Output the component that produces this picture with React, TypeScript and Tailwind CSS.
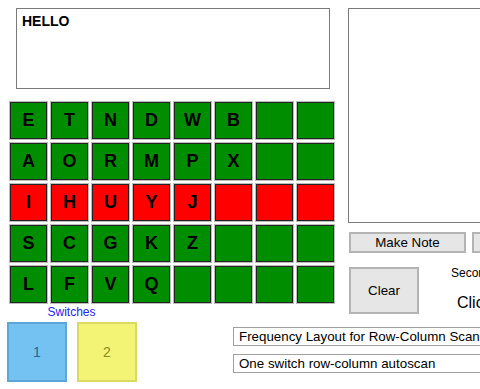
import React from 'react';

const rows: { letters: string[]; color: 'green' | 'red' }[] = [
    { letters: ['E', 'T', 'N', 'D', 'W', 'B', '', ''], color: 'green' },
    { letters: ['A', 'O', 'R', 'M', 'P', 'X', '', ''], color: 'green' },
    { letters: ['I', 'H', 'U', 'Y', 'J', '', '', ''], color: 'red' },
    { letters: ['S', 'C', 'G', 'K', 'Z', '', '', ''], color: 'green' },
    { letters: ['L', 'F', 'V', 'Q', '', '', '', ''], color: 'green' },
];

function Cell({ letter, color }: { letter: string; color: 'green' | 'red' }) {
    return (
        <div
            className={`w-[37px] h-[37px] border border-[#222] shadow-[0_0_0_1px_#bdbdbd] flex items-center justify-center text-[18px] font-bold text-black ${color === 'red' ? 'bg-[#ff0000]' : 'bg-[#008e00]'}`}
        >
            {letter}
        </div>
    );
}

export default function App() {
    return (
        <div className="w-[480px] h-[389px] overflow-hidden bg-white text-black font-['Liberation_Sans',Arial,sans-serif]">
            <div className="flex h-[304px]">
                {/* left column: message + letter grid */}
                <div className="w-[348px] shrink-0 pt-2">
                    <div className="ml-4 w-[314px] h-[81px] border border-[#7a7a7a] px-[5px] pt-[3px] text-[14px] font-bold leading-[18px]">
                        HELLO
                    </div>
                    <div className="ml-[10px] mt-[13px] flex flex-col gap-[4px]">
                        {rows.map((row, i) => (
                            <div key={i} className="flex gap-[4px]">
                                {row.letters.map((l, j) => (
                                    <Cell key={j} letter={l} color={row.color} />
                                ))}
                            </div>
                        ))}
                    </div>
                </div>

                {/* right column: notes + controls */}
                <div className="flex-1 pt-2 min-w-0">
                    <div className="w-[160px] h-[215px] border border-[#7a7a7a]"></div>
                    <div className="mt-[9px] ml-px flex gap-[6px]">
                        <div className="w-[117px] h-[21px] shrink-0 bg-[#e6e6e6] border-2 border-[#b4b4b4] flex items-center justify-center text-[13.33px]">
                            Make Note
                        </div>
                        <div className="w-[60px] h-[21px] shrink-0 bg-[#e6e6e6] border-2 border-[#b4b4b4]"></div>
                    </div>
                    <div className="mt-[14px] ml-px flex">
                        <div className="w-[70px] h-[47px] shrink-0 bg-[#e6e6e6] border-2 border-[#b4b4b4] flex items-center justify-center text-[13.33px]">
                            Clear
                        </div>
                        <div className="ml-[32px] flex flex-col whitespace-nowrap">
                            <span className="text-[12px] leading-[14px] -mt-[1px]">Seconds</span>
                            <span className="ml-[6px] mt-[14px] text-[16px] leading-[18px]">Click</span>
                        </div>
                    </div>
                </div>
            </div>

            {/* bottom row: switches + selects */}
            <div className="flex">
                <div className="w-[226px] shrink-0 pl-[7px]">
                    <div className="w-[129px] text-center text-[12px] leading-[14px] text-[#2424f0] mt-[1px]">
                        Switches
                    </div>
                    <div className="mt-[3px] flex gap-[10px]">
                        <div className="w-[60px] h-[60px] bg-[#74c2f2] border-2 border-[#5ea6d8] flex items-center justify-center text-[14px] text-[#2d6390]">
                            1
                        </div>
                        <div className="w-[60px] h-[60px] bg-[#f3f375] border-2 border-[#dada62] flex items-center justify-center text-[14px] text-[#8c8c1e]">
                            2
                        </div>
                    </div>
                </div>
                <div className="ml-[7px] mt-[23px] flex flex-col gap-[8px]">
                    <div className="w-[280px] h-[19px] border border-[#a0a0a0] px-[5px] text-[13.33px] leading-[17px] whitespace-nowrap overflow-hidden">
                        Frequency Layout for Row-Column Scan
                    </div>
                    <div className="w-[280px] h-[19px] border border-[#a0a0a0] px-[5px] text-[13.33px] leading-[17px] whitespace-nowrap overflow-hidden">
                        One switch row-column autoscan
                    </div>
                </div>
            </div>
        </div>
    );
}
